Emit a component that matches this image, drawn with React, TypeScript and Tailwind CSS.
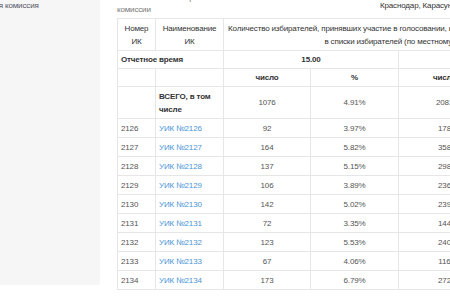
import React from "react";

const rows: [string, string, string, string][] = [
  ["2126", "92", "3.97%", "178"],
  ["2127", "164", "5.82%", "358"],
  ["2128", "137", "5.15%", "298"],
  ["2129", "106", "3.89%", "236"],
  ["2130", "142", "5.02%", "239"],
  ["2131", "72", "3.35%", "144"],
  ["2132", "123", "5.53%", "240"],
  ["2133", "67", "4.06%", "116"],
  ["2134", "173", "6.79%", "272"],
];

const bd = "border border-[#e6e6e6]";

export default function App() {
  return (
    <div
      className="w-[450px] h-[300px] overflow-hidden bg-white flex text-[8px] tracking-[-0.15px] text-[#555]"
      style={{ fontFamily: '"Liberation Sans", Arial, sans-serif' }}
    >
      <div className="w-[100px] h-[285px] bg-[#f6f6f6] shrink-0 overflow-hidden">
        <div className="whitespace-nowrap leading-[12px] ml-[-52px] text-[#556]">
          Избирательная комиссия
        </div>
      </div>
      <div className="pl-[17px] shrink-0">
        <div className="h-[18px] flex">
          <div className="w-[150px] mt-[-8px] leading-[12px] text-[#777]">
            Наименование избирательной
            <br />
            комиссии
          </div>
          <div className="pl-[113px] leading-[12px] whitespace-nowrap text-[#333]">
            Краснодар, Карасунская
          </div>
        </div>
        <table className="table-fixed border-collapse w-[471px] leading-[13px]">
          <colgroup>
            <col className="w-[38px]" />
            <col className="w-[68px]" />
            <col className="w-[87px]" />
            <col className="w-[88px]" />
            <col className="w-[92px]" />
            <col className="w-[98px]" />
          </colgroup>
          <tbody>
            <tr className="h-[32px] text-[#333]">
              <td className={`${bd} text-center align-middle px-[3px]`}>
                Номер
                <br />
                ИК
              </td>
              <td className={`${bd} text-center align-middle px-[3px]`}>
                Наименование
                <br />
                ИК
              </td>
              <td colSpan={4} className={`${bd} text-center align-middle px-[4px] whitespace-nowrap`}>
                Количество избирателей, принявших участие в голосовании, и процент от общего числа избирателей, включенных
                <br />
                в списки избирателей (по местному времени)
              </td>
            </tr>
            <tr className="h-[18px] text-[#333] font-bold">
              <td colSpan={2} className={`${bd} px-[3px] align-middle`}>
                Отчетное время
              </td>
              <td colSpan={2} className={`${bd} text-center align-middle`}>
                15.00
              </td>
              <td colSpan={2} className={`${bd} text-center align-middle`}>
                18.00
              </td>
            </tr>
            <tr className="h-[18px] text-[#333] font-bold">
              <td className={bd}></td>
              <td className={bd}></td>
              <td className={`${bd} text-center align-middle`}>число</td>
              <td className={`${bd} text-center align-middle`}>%</td>
              <td className={`${bd} text-center align-middle`}>число</td>
              <td className={`${bd} text-center align-middle`}>%</td>
            </tr>
            <tr className="h-[32px]">
              <td className={bd}></td>
              <td className={`${bd} px-[3px] align-middle text-[#333] font-bold leading-[13px]`}>
                ВСЕГО, в том
                <br />
                числе
              </td>
              <td className={`${bd} text-center align-middle`}>1076</td>
              <td className={`${bd} text-center align-middle`}>4.91%</td>
              <td className={`${bd} text-center align-middle`}>2081</td>
              <td className={`${bd} text-center align-middle`}>9.49%</td>
            </tr>
            {rows.map((r) => (
              <tr key={r[0]} className="h-[19px]">
                <td className={`${bd} px-[3px] align-middle`}>{r[0]}</td>
                <td className={`${bd} px-[3px] align-middle text-[#4c94d8]`}>УИК №{r[0]}</td>
                <td className={`${bd} text-center align-middle`}>{r[1]}</td>
                <td className={`${bd} text-center align-middle`}>{r[2]}</td>
                <td className={`${bd} text-center align-middle`}>{r[3]}</td>
                <td className={`${bd} text-center align-middle`}></td>
              </tr>
            ))}
          </tbody>
        </table>
      </div>
    </div>
  );
}
